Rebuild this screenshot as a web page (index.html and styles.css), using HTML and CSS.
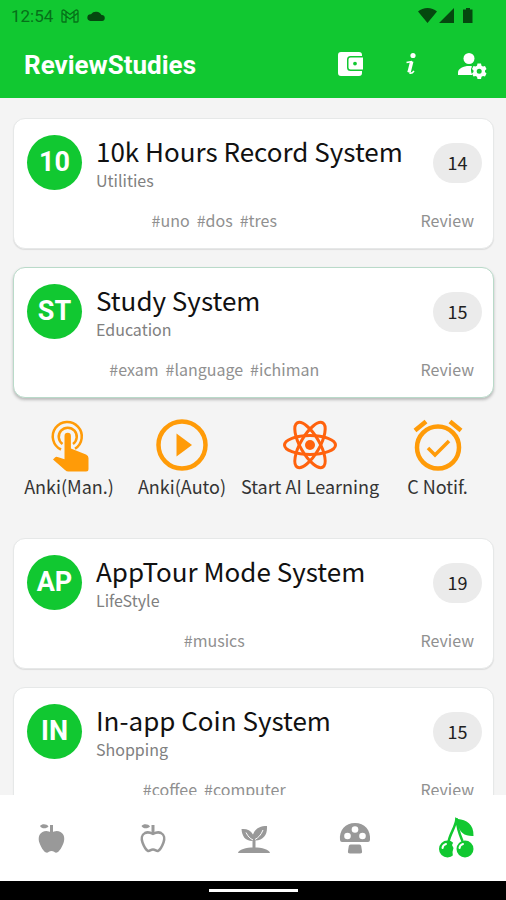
FILE: index.html
```html
<!DOCTYPE html>
<html lang="en">
<head>
<meta charset="utf-8">
<meta name="viewport" content="width=device-width, initial-scale=1">
<title>ReviewStudies</title>
<link rel="stylesheet" href="styles.css">
</head>
<body>
<header class="top">
  <div class="status">
    <span class="clock">12:54</span>
    <svg class="mail" viewBox="0 0 18 14" width="18" height="14"><path d="M1 2.5v9.7c0 .5.3.8.8.8H5V7l4 3 4-3v6h3.200c.5 0 .8-.3.800-.8V2.500C17 1 15.500.600 14.300 1.500L9 5.500 3.700 1.500C2.500.6 1 1 1 2.500zM5 7 1 4m12 3 4-3M5 2.500V7m8-4.500V7"/></svg>
    <svg class="cloud" viewBox="0 0 18 11" width="18" height="11"><path d="M14.500 4A6 5.500 0 0 0 4 3.200 3.400 3.400 0 0 0 3.500 10h11.500a3 3 0 0 0-.5-6z"/></svg>
    <svg class="signals" viewBox="0 0 56 17" width="56" height="17"><path d="M0 3.500C5-1.200 14-1.200 19 3.500L9.500 15zM36 0v15H21zM46 1.500h2V0h4v1.500h2.500V15H45V1.500z"/></svg>
  </div>
  <div class="appbar">
    <h1>ReviewStudies</h1>
    <button class="tool" aria-label="Wallet"><svg viewBox="0 0 28 28" width="28" height="28"><path fill="#fff" d="M5 1h18a3 3 0 0 1 3 3v1H14.500a3.500 3.500 0 0 0-3.500 3.500v8a3.500 3.500 0 0 0 3.500 3.500H26v2a3 3 0 0 1-3 3H5a3 3 0 0 1-3-3V4a3 3 0 0 1 3-3zm9.500 5.500H27v12H14.500a2 2 0 0 1-2-2v-8a2 2 0 0 1 2-2zM19 10.700a1.900 1.900 0 1 0 0 3.800 1.900 1.900 0 0 0 0-3.800z" fill-rule="evenodd"/></svg></button>
    <button class="tool" aria-label="Information"><svg viewBox="0 0 28 28" width="28" height="28"><circle cx="16" cy="4.500" r="2.600" fill="#fff"/><path fill="none" stroke="#fff" stroke-width="1.500" d="M9.500 11.500 15 10.500M17 20c-1.500 2-3.500 2.500-4.500 2"/><path fill="none" stroke="#fff" stroke-width="3.400" d="M14.800 10.300 12 21.500"/></svg></button>
    <button class="tool" aria-label="Account settings"><svg viewBox="0 0 28 28" width="28" height="28"><g fill="#fff"><circle cx="11" cy="7.500" r="5.500"/><path d="M14 15.200c-6-1.200-14 1.300-14 6.300V24h14.500a9 9 0 0 1-.5-8.800z"/><path fill-rule="evenodd" d="M19.500 12.500H23l.5 2.200 1.500.8 2-.6 1.500 3-1.500 1.500v1.700l1.500 1.500-1.500 3-2-.6-1.500.8-.5 2.200h-3.500l-.5-2.200-1.500-.8-2 .6-1.500-3 1.500-1.500v-1.700L14 17.900l1.500-3 2 .6 1.500-.8zm1.700 5.300a2.500 2.500 0 1 0 0 5 2.500 2.500 0 0 0 0-5z"/></g></svg></button>
  </div>
</header>

<main class="list">
  <article class="card">
    <div class="avatar">10</div>
    <div class="names"><h2>10k Hours Record System</h2><p>Utilities</p></div>
    <span class="count">14</span>
    <div class="meta"><p class="tags"><span>#uno</span><span>#dos</span><span>#tres</span></p><a href="#review">Review</a></div>
  </article>

  <article class="card selected">
    <div class="avatar">ST</div>
    <div class="names"><h2>Study System</h2><p>Education</p></div>
    <span class="count">15</span>
    <div class="meta"><p class="tags"><span>#exam</span><span>#language</span><span>#ichiman</span></p><a href="#review">Review</a></div>
  </article>

  <div class="actions">
    <button><svg viewBox="0 0 54 54" width="54" height="54"><g fill="none" stroke="#ff9b08" stroke-width="2.500"><path d="M19 31.500a14.500 14.500 0 1 1 14-.8"/><path d="M20.500 26a9 9 0 1 1 10.500 0"/></g><path fill="#ff9b08" d="M22.500 18a3.200 3.200 0 0 1 6.400 0v12.500L44 36.500q2.500 1 2.500 3.500v11q0 2.500-2.500 2.500H26.500q-2 0-3.500-1.500L11 41.500l2-2q1-1 2.500-.5l7 2.200z"/></svg>Anki(Man.)</button>
    <button><svg viewBox="0 0 54 54" width="54" height="54"><circle cx="27" cy="27" r="23.500" fill="none" stroke="#ff9b08" stroke-width="4.500"/><path fill="#ff9b08" d="M21.500 15.500v23L37 27z"/></svg>Anki(Auto)</button>
    <button><svg viewBox="0 0 54 54" width="54" height="54"><g fill="none" stroke="#ff620d" stroke-width="3"><ellipse cx="27" cy="27" rx="25.500" ry="9.500"/><ellipse cx="27" cy="27" rx="25.500" ry="9.500" transform="rotate(60 27 27)"/><ellipse cx="27" cy="27" rx="25.500" ry="9.500" transform="rotate(120 27 27)"/></g><circle cx="27" cy="27" r="5" fill="#ff620d"/></svg>Start AI Learning</button>
    <button><svg viewBox="0 0 54 54" width="54" height="54"><g fill="none" stroke="#ff9b08"><circle cx="27" cy="29.500" r="21" stroke-width="4.500"/><path stroke-width="4.500" d="M4 12.500 15 3.500M39 3.500l11 9"/><path stroke-width="3.500" d="m17 30 7 7 14-14"/></g></svg>C Notif.</button>
  </div>

  <article class="card">
    <div class="avatar">AP</div>
    <div class="names"><h2>AppTour Mode System</h2><p>LifeStyle</p></div>
    <span class="count">19</span>
    <div class="meta"><p class="tags"><span>#musics</span></p><a href="#review">Review</a></div>
  </article>

  <article class="card">
    <div class="avatar">IN</div>
    <div class="names"><h2>In-app Coin System</h2><p>Shopping</p></div>
    <span class="count">15</span>
    <div class="meta"><p class="tags"><span>#coffee</span><span>#computer</span></p><a href="#review">Review</a></div>
  </article>
</main>

<nav class="tabs">
  <button aria-label="Apple"><svg viewBox="0 0 32 32" width="32" height="32"><path class="solid" d="M4 4c2-2.500 7-2 8.500.5-2 2.500-7 2.500-8.500-.5zM14 3h3v8h-3z"/><path class="solid" d="M15.500 10.500c3-1.500 6-2 9-.5 4 2 4.500 7 3 11-1.500 4-4 8.500-6.500 9.500-2 .7-3-1.500-5.500-1.500s-3.500 2.200-5.500 1.500C7.500 29.500 5 25 3.500 21c-1.500-4-1-9 3-11 3-1.500 6-1 9 .5z"/></svg></button>
  <button aria-label="Apple outline"><svg viewBox="0 0 32 32" width="32" height="32"><path class="solid" d="M4.500 4c2-2.500 7-2 8.500.5-2 2.500-7 2.500-8.500-.5zM14.500 3h3v8h-3z"/><path fill="none" stroke="#999" stroke-width="2.500" d="M16 11.800c3-1.500 5.500-2 8-.8 3.500 1.800 3.800 6 2.500 9.500-1.300 3.500-3.500 7.500-5.500 8.500-1.700.5-2.500-1.500-5-1.500s-3.300 2-5 1.500c-2-1-4.200-5-5.500-8.500C4.200 17 4.500 12.800 8 11c2.500-1.200 5-.7 8 .8z"/></svg></button>
  <button aria-label="Sprout"><svg viewBox="0 0 32 32" width="32" height="32"><path class="solid" d="M0 31c.5-3.500 8-5.500 16-5.500S31.500 27.500 32 31zM14.500 26v-7C7 19 4 14 3.500 7c5-.5 9 1 11.500 5.500C17 6.500 22 4 29 4c.5 9-3.500 14-11.500 14.500V26z"/><path fill="none" stroke="#fff" d="M8 10.500c2 4 4 6 7 7.500M25 8c-2 5-4.500 7.500-8 9.500"/></svg></button>
  <button aria-label="Mushroom"><svg viewBox="0 0 32 32" width="32" height="32"><path class="solid" d="M1 18C0 8 6.500 1 16 1s16 7 15 17q-.2 2-2 2H3q-1.800 0-2-2zM11.500 22.500h9q1.500 0 1.700 1.500l.8 5q.5 2.500-2 2.500H11q-2.500 0-2-2.500l.8-5q.2-1.500 1.700-1.500z"/><g fill="#fff"><circle cx="16" cy="7.500" r="3.300"/><circle cx="8.500" cy="14" r="3.300"/><circle cx="23.500" cy="14" r="3.300"/></g></svg></button>
  <button class="current" aria-label="Cherries"><svg viewBox="0 0 36 42" width="36" height="42"><g fill="#11c831"><circle cx="9.500" cy="32" r="8.500"/><circle cx="27" cy="32" r="8.500"/><path d="M17 0l3 2c8 .5 16 5 15.500 17-8 .5-14.500-3-16-13z"/></g><path fill="none" stroke="#11c831" stroke-width="2.500" d="M18.500 1C18 10 12 16 10.500 25M19 4c.5 9 3 14 5.500 20"/><path fill="none" stroke="#fff" stroke-width="2" stroke-linecap="round" d="M4.500 31c.3-2 1.500-3.500 3.500-4M21.500 31c.3-2 1.500-3.500 3.500-4"/><path fill="#fff" d="M15.500 25l-1.500 3 1.500 3-1 4 .5 5h3V25z"/></svg></button>
</nav>
<footer class="system"><span></span></footer>
</body>
</html>
```
FILE: styles.css
```css
* { box-sizing: border-box; }

body {
  margin: 0;
  height: 100vh;
  display: flex;
  flex-direction: column;
  background: #f4f4f4;
  color: #111;
  font-family: "Noto Sans CJK JP", "Noto Sans", sans-serif;
}

h1, h2, p { margin: 0; font-weight: 400; }

button {
  padding: 0;
  border: 0;
  background: none;
  color: inherit;
  font: inherit;
}

svg { display: block; flex: none; overflow: visible; }

.top { flex: none; background: #11c831; }

.status {
  display: flex;
  align-items: center;
  gap: 8px;
  height: 32px;
  padding: 0 32px 0 11px;
  color: #067019;
  font: 17px/32px Roboto, sans-serif;
}
.mail { fill: none; stroke: #067019; stroke-width: 1.3; }
.cloud { fill: #05480f; }
.signals { margin-left: auto; fill: #05480f; }

.appbar {
  display: flex;
  align-items: center;
  gap: 33px;
  height: 66px;
  padding: 0 20px 0 24px;
}
.appbar h1 {
  flex: 1;
  color: #fff;
  font: 700 26px/32px Roboto, sans-serif;
}

.list {
  flex: 1;
  min-height: 0;
  overflow: hidden;
  padding: 20px 12px 0 13px;
}

.card {
  display: grid;
  grid-template-columns: 55px 1fr 49px;
  column-gap: 14px;
  align-items: center;
  margin-bottom: 18px;
  padding: 14px 11px 14px 13px;
  border: 1px solid #e6e8e8;
  border-radius: 12px;
  background: #fff;
  box-shadow: 0 1px 1px #ddd;
}
.card.selected {
  border-color: #b9dac9;
  box-shadow: 0 2px 3px #bbb;
}

.avatar {
  border-radius: 50%;
  background: #11c831;
  color: #fff;
  font: 700 27px/55px Roboto, sans-serif;
  text-align: center;
}

.names h2 { font-size: 26px; line-height: 36px; white-space: nowrap; }
.names p { color: #808080; font-size: 16px; line-height: 23px; }

.count {
  padding-bottom: 2px;
  border-radius: 20px;
  background: #ebebeb;
  color: #222;
  font-size: 18px;
  line-height: 38px;
  text-align: center;
}

.meta {
  grid-column: 1 / -1;
  display: flex;
  gap: 19px;
  margin-top: 14px;
  padding-right: 8px;
  color: #909090;
  font-size: 16px;
  line-height: 28px;
}
.meta a { color: inherit; text-decoration: none; }
.tags { flex: 1; display: flex; justify-content: center; gap: 7px; }

.actions {
  display: grid;
  grid-template-columns: 112fr 114fr 142fr 113fr;
  margin: 20px 0 39px;
}
.actions button {
  display: flex;
  flex-direction: column;
  align-items: center;
  gap: 1px;
  color: #333;
  font-size: 18px;
  line-height: 26px;
  white-space: nowrap;
}

.tabs {
  flex: none;
  display: grid;
  grid-template-columns: repeat(5, 1fr);
  height: 86px;
  padding-left: 2px;
  background: #fff;
}
.tabs button { display: grid; place-items: center; }
.solid { fill: #999; }

.system {
  flex: none;
  display: grid;
  place-items: center;
  height: 19px;
  background: #000;
}
.system span { width: 89px; height: 3px; background: #fff; }
```
